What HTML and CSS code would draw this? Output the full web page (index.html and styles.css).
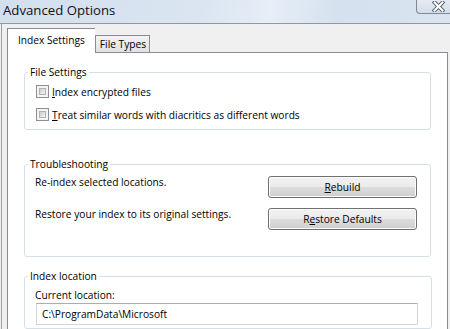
FILE: index.html
```html
<!DOCTYPE html>
<html lang="en">
<head>
  <meta charset="UTF-8">
  <title>Advanced Options</title>
  <link rel="stylesheet" href="styles.css">
</head>

<body>

<div class="window">
  <div class="titlebar">
    <span class="title">Advanced Options</span>
    <div class="close">
      <svg width="13" height="11" viewBox="0 0 13 11">
        <path d="M2.5 1.5 L10.5 9.5 M10.5 1.5 L2.5 9.5" stroke="#5b6573" stroke-width="4" stroke-linecap="square"/>
        <path d="M2.5 1.5 L10.5 9.5 M10.5 1.5 L2.5 9.5" stroke="#ffffff" stroke-width="2" stroke-linecap="square"/>
      </svg>
    </div>
  </div>

  <div class="client">
    <div class="tabs">
      <div class="tab active">Index Settings</div>
      <div class="tab">File Types</div>
    </div>

    <div class="panel">
      <fieldset class="group">
        <legend>File Settings</legend>
        <label class="check-row"><span class="check"></span><span><u>I</u>ndex encrypted files</span></label>
        <label class="check-row"><span class="check"></span><span><u>T</u>reat similar words with diacritics as different words</span></label>
      </fieldset>

      <fieldset class="group trouble">
        <legend>Troubleshooting</legend>
        <div class="action-row">
          <span class="action-text">Re-index selected locations.</span>
          <button class="btn"><u>R</u>ebuild</button>
        </div>
        <div class="action-row">
          <span class="action-text">Restore your index to its original settings.</span>
          <button class="btn">R<u>e</u>store Defaults</button>
        </div>
      </fieldset>

      <fieldset class="group location">
        <legend>Index location</legend>
        <div class="field-label">Current location:</div>
        <div class="textbox">C:\ProgramData\Microsoft</div>
      </fieldset>
    </div>
  </div>
</div>

</body>
</html>
```

FILE: styles.css
```css
body {
  margin: 0;
  background: #f0f0f0;
  font-family: "Open Sans", "Noto Sans", sans-serif;
  font-size: 10.2px;
  color: #000;
  overflow: hidden;
}
.window {
  width: 450px;
  height: 329px;
  overflow: hidden;
}
.titlebar {
  display: flex;
  align-items: flex-start;
  height: 23px;
  border-bottom: 1px solid #8d99a6;
  background: linear-gradient(100deg, #d2dfed 0%, #dae5f1 45%, #e6eef7 60%, #d5e1ee 75%, #d9e4f0 100%);
}
.title {
  padding-left: 3px;
  line-height: 21px;
  font-size: 13.2px;
  color: #111;
}
.close {
  margin-left: auto;
  width: 34px;
  height: 14px;
  box-sizing: border-box;
  border: 1px solid #7d8898;
  border-top: none;
  border-right: none;
  border-bottom-left-radius: 4px;
  background: linear-gradient(#e4ebf3, #d4dde8);
  display: flex;
  align-items: center;
  justify-content: center;
  padding-left: 10px;
}
.client {
  margin-left: 1px;
  border-left: 1px solid #a0a0a0;
  padding: 5px 0 0 5px;
}
.tabs {
  display: flex;
  align-items: flex-end;
  height: 23px;
}
.tab {
  height: 16px;
  line-height: 17px;
  padding: 0 3px 0 4px;
  white-space: nowrap;
  border: 1px solid #898c95;
  border-bottom: none;
  background: linear-gradient(#f3f3f3, #e2e2e2);
}
.tab.active {
  position: relative;
  z-index: 1;
  height: 24px;
  line-height: 23px;
  margin-bottom: -1px;
  padding: 0 10px;
  background: #fff;
  border-right: none;
}
.panel {
  height: 290px;
  margin-right: 2px;
  background: #fff;
  border: 1px solid #898c95;
  padding-top: 11px;
}
.group {
  margin: 0 16px;
  padding: 0 13px 3px 10px;
  border: 1px solid #d5dfe5;
  border-radius: 3px;
}
.group legend {
  margin-left: -7px;
  padding: 0 2px;
  line-height: 16px;
}
.check-row {
  display: flex;
  align-items: center;
  height: 23px;
}
.check {
  width: 13px;
  height: 13px;
  box-sizing: border-box;
  margin: 0 3px 0 1px;
  border: 1px solid #8e8f8f;
  padding: 2px;
  background: #f4f4f4;
}
.check::before {
  content: "";
  display: block;
  height: 100%;
  box-sizing: border-box;
  border: 1px solid #b2b2b2;
  background: linear-gradient(135deg, #cdcdcd, #f3f3f3);
}
.trouble {
  margin-top: 26px;
  padding-top: 4px;
  padding-bottom: 26px;
}
.action-row {
  display: flex;
  align-items: flex-start;
  justify-content: space-between;
}
.action-row + .action-row {
  margin-top: 10px;
}
.action-text {
  line-height: 12px;
}
.btn {
  width: 149px;
  height: 22px;
  padding: 0;
  font-family: inherit;
  font-size: 10.2px;
  color: #000;
  border: 1px solid #707070;
  border-radius: 3px;
  background: linear-gradient(#f2f2f2 0%, #ebebeb 50%, #dddddd 51%, #cfcfcf 100%);
  box-shadow: inset 0 0 0 1px #fcfcfc;
}
.location {
  margin-top: 11px;
  padding-top: 3px;
}
.field-label {
  line-height: 16px;
}
.textbox {
  margin: 0 0 0 1px;
  width: 382px;
  height: 22px;
  box-sizing: border-box;
  line-height: 20px;
  padding-left: 5px;
  border: 1px solid #d3d6da;
  border-top-color: #abadb3;
}
```
